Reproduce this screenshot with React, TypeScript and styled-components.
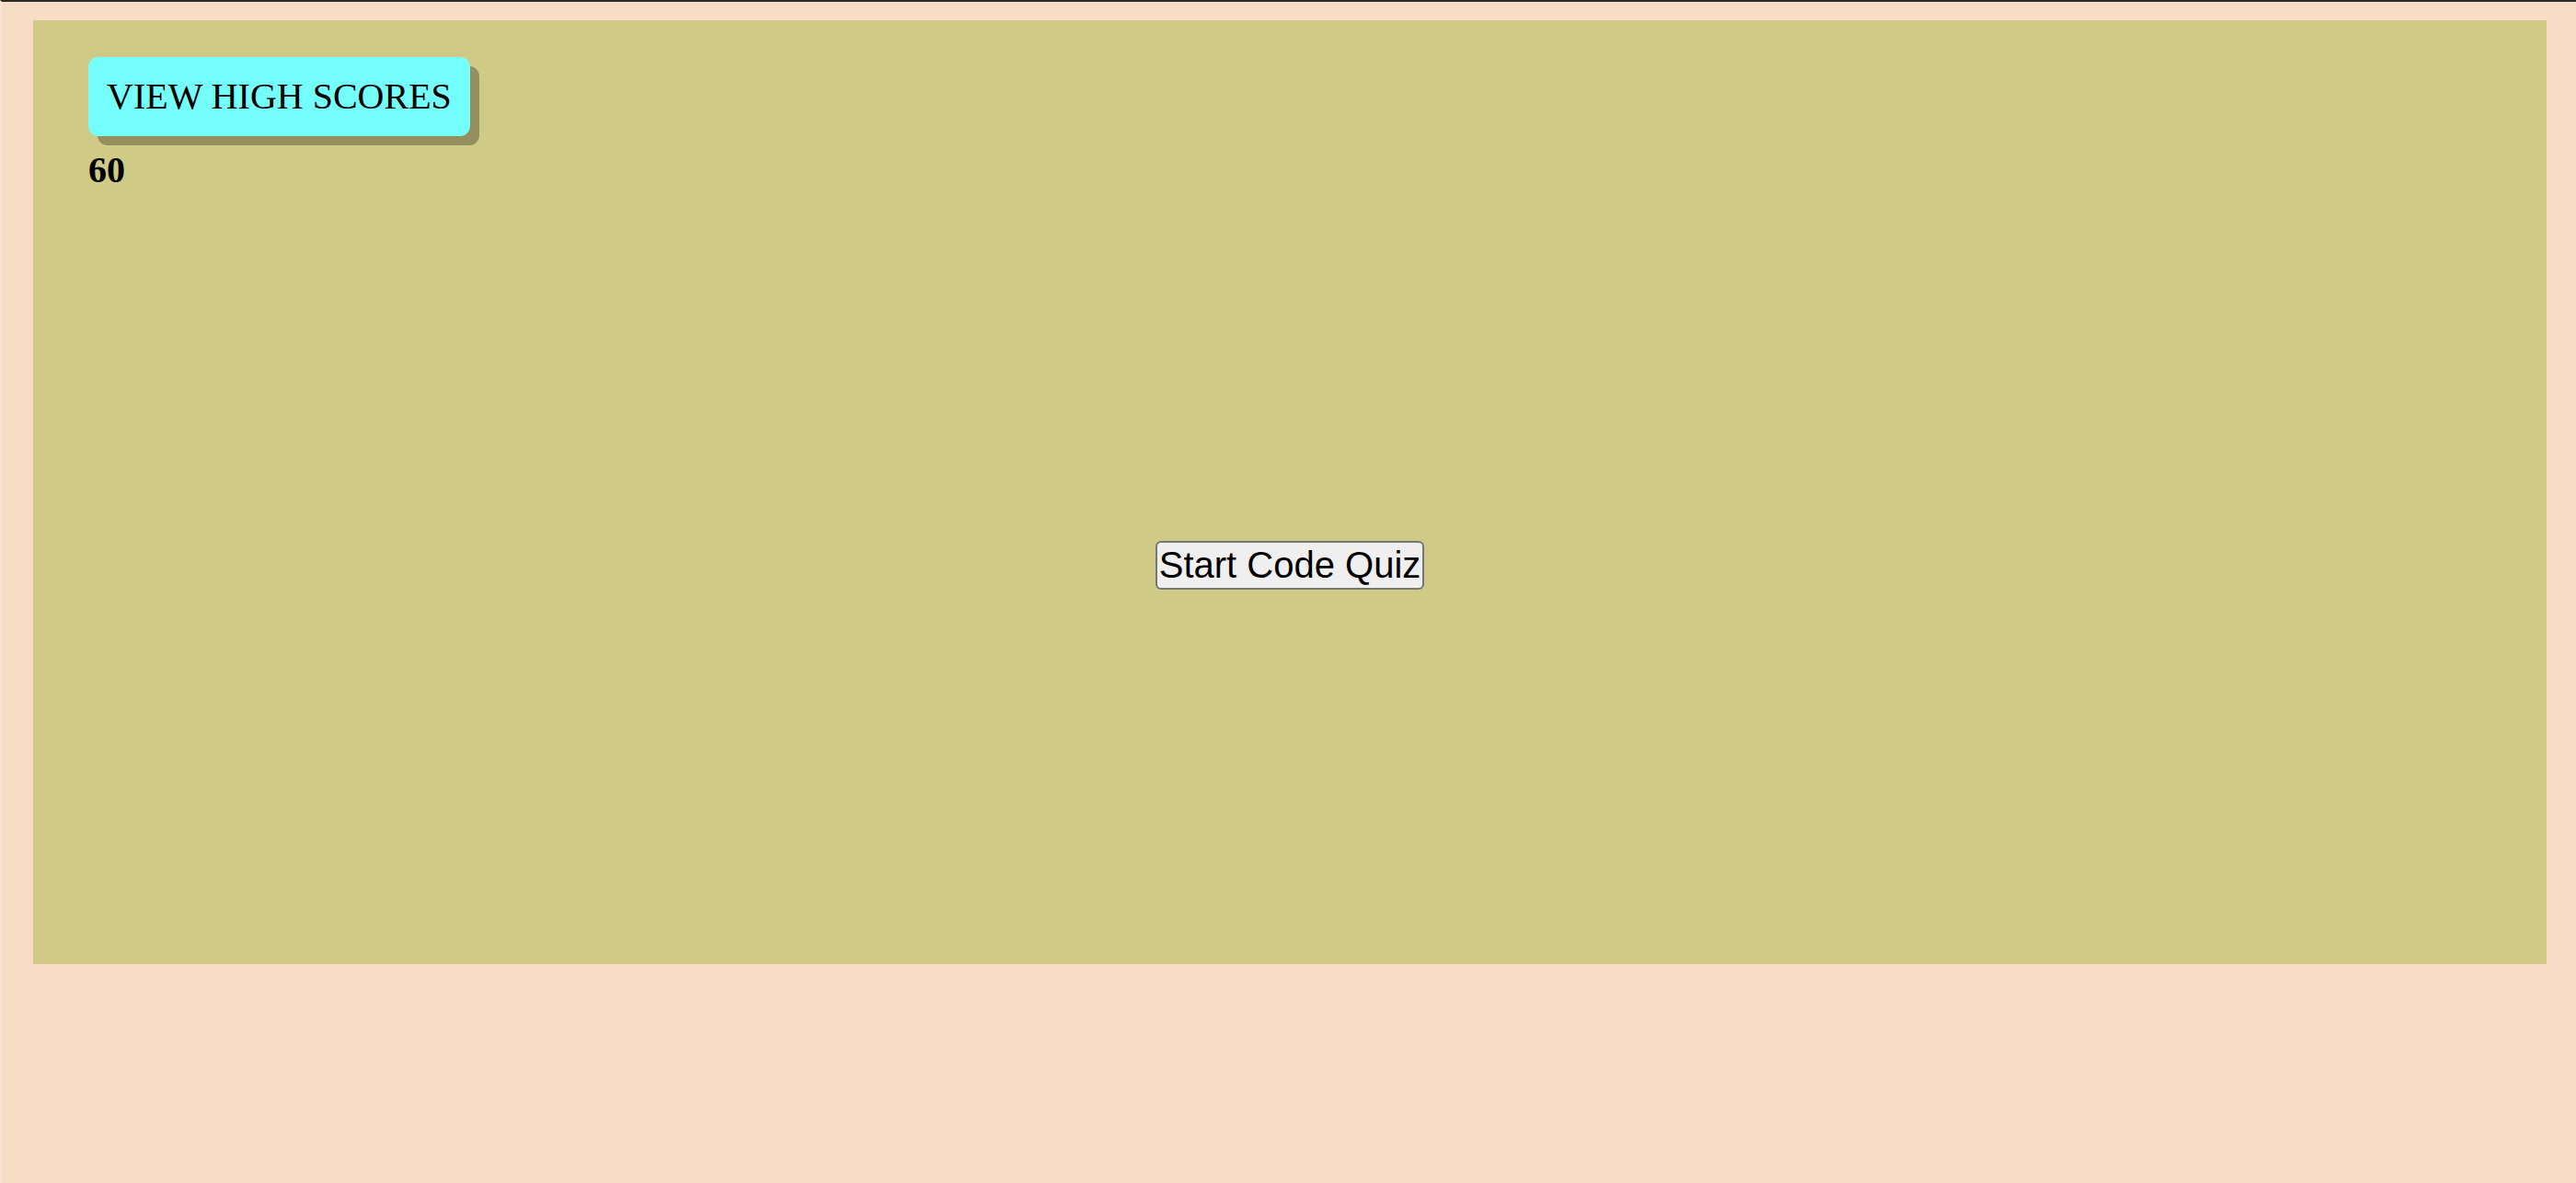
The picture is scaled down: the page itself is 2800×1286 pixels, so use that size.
import React from "react";
import styled, { createGlobalStyle } from "styled-components";

const Global = createGlobalStyle`
  html, body {
    margin: 0;
    padding: 0;
    background: #f7dcc6;
    font-family: "Liberation Serif", "Times New Roman", serif;
    color: #000;
  }
  #root {
    min-height: 1286px;
  }
`;

const Frame = styled.div`
  min-height: 1286px;
  box-sizing: border-box;
  border-top: 2px solid #2b2a2a;
  border-left: 2px solid #f9e4d8;
  display: flex;
  flex-direction: column;
`;

const Panel = styled.main`
  margin: 20px 32px 0 34px;
  height: 1026px;
  box-sizing: border-box;
  background: #cfcb86;
  padding: 40px 60px;
  display: flex;
  flex-direction: column;
`;

const Header = styled.header`
  display: flex;
  flex-direction: column;
  align-items: flex-start;
`;

const ScoresButton = styled.button`
  font-family: "Liberation Serif", "Times New Roman", serif;
  font-size: 40px;
  line-height: 46px;
  padding: 20px 20px 20px 20px;
  border: none;
  border-radius: 11px;
  background: #74fffc;
  color: #000;
  box-shadow: 10px 10px 0 #958f5e;
  cursor: pointer;
`;

const Timer = styled.div`
  margin-top: 14px;
  font-size: 40px;
  line-height: 46px;
  font-weight: bold;
`;

const Stage = styled.section`
  display: flex;
  justify-content: center;
  padding-top: 380px;
`;

const StartButton = styled.button`
  font-family: "Liberation Sans", Arial, Helvetica, sans-serif;
  font-size: 40px;
  line-height: 46px;
  padding: 1px 2px 2px 2px;
  border: 2px solid #767676;
  border-radius: 6px;
  background: #efefef;
  color: #000;
  cursor: pointer;
`;

export default function App() {
  return (
    <>
      <Global />
      <Frame>
        <Panel>
          <Header>
            <ScoresButton>VIEW HIGH SCORES</ScoresButton>
            <Timer>60</Timer>
          </Header>
          <Stage>
            <StartButton>Start Code Quiz</StartButton>
          </Stage>
        </Panel>
      </Frame>
    </>
  );
}
